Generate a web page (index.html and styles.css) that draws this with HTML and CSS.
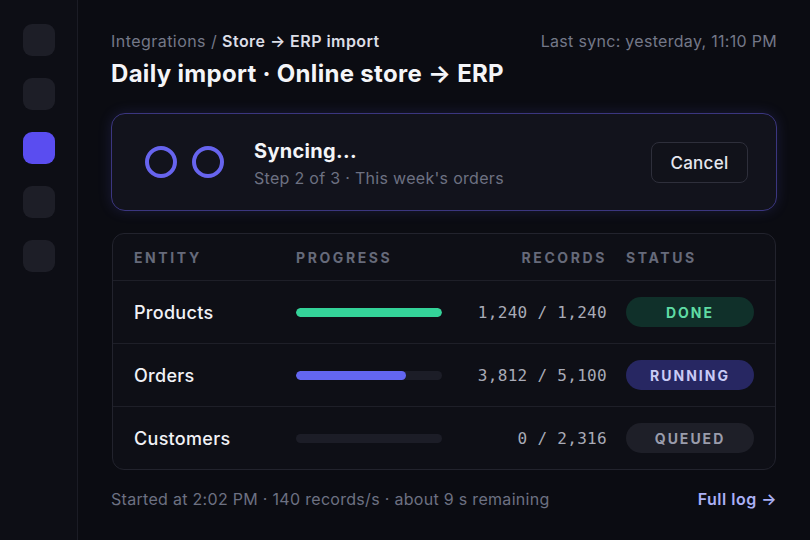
FILE: index.html
```html
<!DOCTYPE html>
<html lang="en">
<head>
    <meta charset="UTF-8">
    <meta name="viewport" content="width=device-width, initial-scale=1.0">
    <title>Daily import</title>
    <link rel="stylesheet" href="styles.css">
</head>
<body>
    <div class="app">
        <nav class="sidebar">
            <div class="nav-item"></div>
            <div class="nav-item"></div>
            <div class="nav-item active"></div>
            <div class="nav-item"></div>
            <div class="nav-item"></div>
        </nav>

        <main class="main">
            <div class="topline">
                <div class="crumbs">Integrations / <span class="crumb-current">Store → ERP import</span></div>
                <div class="last-sync">Last sync: yesterday, 11:10 PM</div>
            </div>
            <h1 class="title">Daily import · Online store → ERP</h1>

            <div class="sync-card">
                <div class="spinner">
                    <span class="ring"></span>
                    <span class="ring"></span>
                </div>
                <div class="sync-text">
                    <div class="sync-title">Syncing...</div>
                    <div class="sync-sub">Step 2 of 3 · This week's orders</div>
                </div>
                <button class="btn-cancel">Cancel</button>
            </div>

            <div class="table">
                <div class="row head">
                    <div>Entity</div>
                    <div>Progress</div>
                    <div class="num">Records</div>
                    <div>Status</div>
                </div>
                <div class="row">
                    <div class="entity">Products</div>
                    <div class="bar"><div class="fill green" style="width: 100%"></div></div>
                    <div class="num records">1,240 / 1,240</div>
                    <div><span class="pill done">Done</span></div>
                </div>
                <div class="row">
                    <div class="entity">Orders</div>
                    <div class="bar"><div class="fill blue" style="width: 75%"></div></div>
                    <div class="num records">3,812 / 5,100</div>
                    <div><span class="pill running">Running</span></div>
                </div>
                <div class="row">
                    <div class="entity">Customers</div>
                    <div class="bar"><div class="fill" style="width: 0%"></div></div>
                    <div class="num records">0 / 2,316</div>
                    <div><span class="pill queued">Queued</span></div>
                </div>
            </div>

            <div class="footer">
                <span>Started at 2:02 PM · 140 records/s · about 9 s remaining</span>
                <a class="full-log" href="#">Full log →</a>
            </div>
        </main>
    </div>
</body>
</html>
```

FILE: styles.css
```css
body {
    margin: 0;
    background-color: #0b0c12;
    font-family: Inter, "Noto Sans", sans-serif;
    letter-spacing: 0.3px;
    color: #eceef4;
}

.app {
    display: flex;
    width: 810px;
    height: 540px;
    overflow: hidden;
}

.sidebar {
    width: 78px;
    flex-shrink: 0;
    background-color: #0d0e15;
    border-right: 1px solid #1b1c25;
    display: flex;
    flex-direction: column;
    align-items: center;
    gap: 22px;
    padding-top: 24px;
    box-sizing: border-box;
}

.nav-item {
    width: 32px;
    height: 32px;
    border-radius: 9px;
    background-color: #1d1e27;
}

.nav-item.active {
    background-color: #5a4df0;
}

.main {
    flex: 1;
    padding: 31px 33px 0 33px;
}

.topline {
    display: flex;
    justify-content: space-between;
    align-items: center;
    height: 20px;
}

.crumbs {
    font-size: 16px;
    letter-spacing: 0.45px;
    color: #747888;
}

.crumb-current {
    color: #dcdee6;
    font-weight: 600;
}

.last-sync {
    font-size: 16px;
    color: #747888;
}

.title {
    margin: 8px 0 0;
    font-size: 24px;
    line-height: 30px;
    font-weight: 700;
    color: #f4f5f8;
}

.sync-card {
    margin-top: 24px;
    height: 98px;
    box-sizing: border-box;
    display: flex;
    align-items: center;
    padding: 0 28px 0 33px;
    background-color: #12131c;
    border: 1px solid #3b3680;
    border-radius: 14px;
    box-shadow: 0 0 14px rgba(99, 102, 241, 0.16);
}

.spinner {
    display: flex;
    gap: 15px;
    margin-right: 30px;
}

.ring {
    width: 32px;
    height: 32px;
    box-sizing: border-box;
    border: 4px solid #6764ee;
    border-radius: 50%;
}

.sync-text {
    flex: 1;
    padding-top: 3px;
}

.sync-title {
    font-size: 20px;
    font-weight: 700;
    line-height: 24px;
    color: #f4f5f8;
}

.sync-sub {
    margin-top: 5px;
    font-size: 16px;
    color: #6d7182;
}

.btn-cancel {
    width: 97px;
    height: 41px;
    padding: 2px 0 0;
    background-color: #11121a;
    border: 1px solid #2e2f3b;
    border-radius: 8px;
    color: #e6e7ee;
    font-family: inherit;
    font-size: 17px;
    font-weight: 500;
    letter-spacing: 0.3px;
}

/* table sits 1px inside the card edges */
.table {
    margin: 22px 1px 0;
    background-color: #0e0f16;
    border: 1px solid #22232d;
    border-radius: 12px;
}

.row {
    display: grid;
    grid-template-columns: 162px 146px 1fr 128px;
    align-items: center;
    height: 62px;
    padding: 0 21px;
    border-top: 1px solid #1e1f28;
}

.row.head {
    height: 46px;
    border-top: none;
    font-size: 14px;
    font-weight: 700;
    letter-spacing: 2.6px;
    text-transform: uppercase;
    color: #666a7a;
}

.num {
    text-align: right;
    padding-right: 19px;
}

.entity {
    font-size: 18px;
    font-weight: 500;
    color: #f1f2f6;
}

.bar {
    height: 9px;
    border-radius: 5px;
    background-color: #1c1d27;
    overflow: hidden;
}

.fill {
    height: 100%;
    border-radius: 5px;
}

.fill.green {
    background-color: #34d399;
}

.fill.blue {
    background-color: #6366f1;
}

.records {
    font-family: "DejaVu Sans Mono", monospace;
    font-size: 16px;
    color: #a9abb7;
}

.pill {
    display: flex;
    justify-content: center;
    align-items: center;
    width: 128px;
    height: 30px;
    border-radius: 15px;
    font-size: 14px;
    font-weight: 700;
    letter-spacing: 2px;
    text-transform: uppercase;
}

.pill.done {
    background-color: #10302a;
    color: #5fdba4;
}

.pill.running {
    background-color: #272762;
    color: #c9cbf6;
}

.pill.queued {
    background-color: #1e1f28;
    color: #9a9cab;
}

.footer {
    margin-top: 19px;
    display: flex;
    justify-content: space-between;
    align-items: center;
    height: 20px;
    font-size: 16px;
    color: #6d7182;
}

.full-log {
    color: #aab0f5;
    font-weight: 600;
    letter-spacing: 0.5px;
    text-decoration: none;
}
```
